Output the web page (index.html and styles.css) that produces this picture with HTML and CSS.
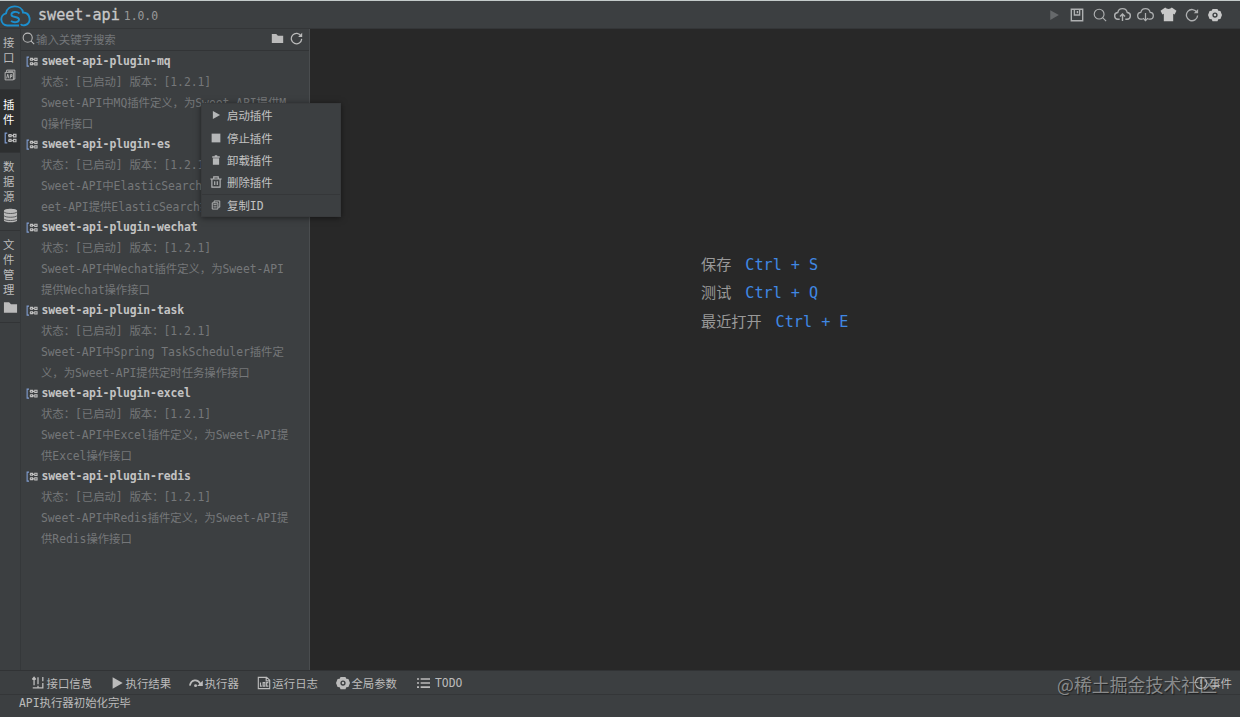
FILE: index.html
```html
<!DOCTYPE html>
<html lang="zh-CN">

<head>
    <meta charset="UTF-8" />
    <meta name="viewport" content="width=device-width, initial-scale=1" />
    <title>sweet-api</title>
    <link rel="stylesheet" href="styles.css">
</head>

<body>
    <!-- Shared icons -->
    <svg class="sprite">
        <symbol id="i-search" viewBox="0 0 16 16"><g fill="none" stroke="currentColor" stroke-width="1.3"><circle cx="7" cy="7" r="5.6" /><path d="M11 11l4 4" /></g></symbol>
        <symbol id="i-refresh" viewBox="0 0 16 16"><path d="M13.6 5A6.4 6.4 0 1 0 14.4 8.500" fill="none" stroke="currentColor" stroke-width="1.5" /><path d="M15 1v5h-5z" fill="currentColor" /></symbol>
        <symbol id="i-folder" viewBox="0 0 16 16"><path d="M1 2.500h5.500l2 2H15v9H1z" fill="currentColor" /></symbol>
        <symbol id="i-play" viewBox="0 0 16 16"><path d="M3 1.500v13L14.500 8z" fill="currentColor" /></symbol>
        <symbol id="i-gear" viewBox="0 0 16 16"><path fill="currentColor" fill-rule="evenodd" d="M5.200 1h5.600l1 2.200 2.400.3L16 8l-1.800 4.500-2.400.3-1 2.200H5.200l-1-2.200-2.400-.3L0 8l1.800-4.500 2.400-.3zM8 5a3 3 0 1 0 0 6 3 3 0 0 0 0-6z" /><circle cx="8" cy="8" r="1.400" fill="currentColor" /></symbol>
        <symbol id="i-plugin" viewBox="0 0 16 16"><path d="M4 1.500H1.500v12H4" fill="none" stroke="#7f9cce" stroke-width="1.500" /><g fill="none" stroke="currentColor" stroke-width="1.500"><path d="M5 4.500h1M9 4.500h2M5 10.500h1M9 10.500h2" /><path d="M6.200 3.200h2.500v2.500H6.200zM11.700 3h3v3h-3zM6.200 9h2.500v2.500H6.200zM11.700 9h3v3h-3z" /></g></symbol>
        <symbol id="i-api" viewBox="0 0 16 16"><g fill="none" stroke="currentColor" stroke-width="1.200"><path d="M3.500 4V1.500h11v12h-2M1.500 4.500h11v10h-11zM3.500 12.500L5 7l1.500 5.500M8.500 12.500V7.500h2V10h-2M5.500 3h7" /></g></symbol>
        <symbol id="i-db" viewBox="0 0 16 16"><path d="M1 3c0-3 14-3 14 0v10c0 3-14 3-14 0z" fill="currentColor" /><path d="M1 4c1 2.500 13 2.500 14 0M1 8c1 2.500 13 2.500 14 0M1 11.500c1 2.500 13 2.500 14 0" fill="none" stroke="#3c3f41" stroke-width=".8" /></symbol>
        <symbol id="i-save" viewBox="0 0 16 16"><path d="M1.500 1.500h13v13h-13zM5 2v6h6V2M8.500 3.500V6" fill="none" stroke="currentColor" stroke-width="1.600" /></symbol>
        <symbol id="i-upload" viewBox="0 0 18 16"><path d="M6 13H4.500A3.600 3.600 0 0 1 4 5.800a5.100 5.100 0 0 1 10 0A3.600 3.600 0 0 1 13.500 13H12M9 15V7.500M6.300 10.200L9 7.500l2.700 2.700" fill="none" stroke="currentColor" stroke-width="1.500" /></symbol>
        <symbol id="i-download" viewBox="0 0 18 16"><path d="M6 13H4.500A3.600 3.600 0 0 1 4 5.800a5.100 5.100 0 0 1 10 0A3.600 3.600 0 0 1 13.500 13H12M9 6.500v8M6.300 11.800L9 14.500l2.700-2.700" fill="none" stroke="currentColor" stroke-width="1.300" /></symbol>
        <symbol id="i-shirt" viewBox="0 0 18 16"><path d="M5.500.5C7 2.500 11 2.500 12.500.5L17.500 4l-2 4-1.500-.7v8H4v-8L2.500 8l-2-4z" fill="currentColor" /></symbol>
        <symbol id="i-stop" viewBox="0 0 16 16"><path d="M1 1h14v14H1z" fill="currentColor" /></symbol>
        <symbol id="i-bin" viewBox="0 0 16 16"><path d="M2 2H6V.5h4V2h4v2.300H2zM3 5.200h10v10.300H3z" fill="currentColor" /></symbol>
        <symbol id="i-trash" viewBox="0 0 16 16"><path d="M.5 4h15M5 4V1.200h6V4M2.500 4v10.800h11V4M6.300 7v5M9.700 7v5" fill="none" stroke="currentColor" stroke-width="1.500" /></symbol>
        <symbol id="i-copy" viewBox="0 0 16 16"><path d="M5 4V1.500h9v10h-2.500M2 4.500h9v10H2zM4 7.500h5M4 11h5" fill="none" stroke="currentColor" stroke-width="1.500" /></symbol>
        <symbol id="i-info" viewBox="0 0 16 16"><path d="M3.500 1.500v9M8 1.500v8M1.500 4l2-2.500 2 2.500M2 13.500h11.500V8M13.500 1v5M8 11v2" fill="none" stroke="currentColor" stroke-width="1.500" /></symbol>
        <symbol id="i-step" viewBox="0 0 16 16"><path d="M1 11C2.500 3.500 10 3 13 9" fill="none" stroke="currentColor" stroke-width="2" /><path d="M15.800 5v6.500H9.300z" fill="currentColor" /><circle cx="7.500" cy="11" r="1.700" fill="currentColor" /></symbol>
        <symbol id="i-log" viewBox="0 0 16 16"><path d="M1.500 8V1.500h9.500l3.500 3.300V8M1.500 7v7.500h13V7M10.500 2v3.500H14M4 7.500v4h1.500M7 7.500h2v4H7zM13 7.500h-2v4h2" fill="none" stroke="currentColor" stroke-width="1.300" /></symbol>
        <symbol id="i-list" viewBox="0 0 16 16"><path d="M0 3h2.500M4.500 3H16M0 8h2.500M4.500 8H16M0 13h2.500M4.500 13H16" fill="none" stroke="currentColor" stroke-width="2" /></symbol>
        <symbol id="i-event" viewBox="0 0 16 16"><circle cx="8" cy="8" r="6.500" fill="none" stroke="currentColor" stroke-width="1.300" /><path d="M8 4v5M8 10.500V12" stroke="currentColor" stroke-width="1.500" /></symbol>
    </svg>

    <!-- Header -->
    <header class="header">
        <svg class="logo" viewBox="0 0 31 22">
            <path d="M19 20.500H7.200A6.200 6.200 0 0 1 6 8.300C7.500-1 22-.5 23 7.500c7.500 0 9 10.500 2.500 12.500-2 .6-4 .6-4.500-1" />
            <path d="M19.500 8.500c-3-3-8.500-1.500-8 1.500.6 3 7.500 1 7.500 4.500 0 3-5 3.500-8 1.500" />
        </svg>
        <h1>sweet-api</h1>
        <span class="version">1.0.0</span>
        <div class="tools">
            <svg class="disabled"><use href="#i-play" /></svg>
            <svg><use href="#i-save" /></svg>
            <svg><use href="#i-search" /></svg>
            <svg class="wide"><use href="#i-upload" /></svg>
            <svg class="wide"><use href="#i-download" /></svg>
            <svg class="wide bright"><use href="#i-shirt" /></svg>
            <svg><use href="#i-refresh" /></svg>
            <svg class="bright"><use href="#i-gear" /></svg>
        </div>
    </header>

    <main class="main">
        <!-- Vertical tabs -->
        <nav class="tabs">
            <div class="tab tab-api"><span>接口</span><svg><use href="#i-api" /></svg></div>
            <div class="tab tab-plugin active"><span>插件</span><svg><use href="#i-plugin" /></svg></div>
            <div class="tab tab-db"><span>数据源</span><svg><use href="#i-db" /></svg></div>
            <div class="tab tab-file"><span>文件管理</span><svg><use href="#i-folder" /></svg></div>
        </nav>

        <!-- Plugin list -->
        <aside class="panel">
            <div class="search">
                <svg><use href="#i-search" /></svg>
                <span class="placeholder">输入关键字搜索</span>
                <svg><use href="#i-folder" /></svg>
                <svg><use href="#i-refresh" /></svg>
            </div>
            <ul class="plugins">
                <li>
                    <h2><svg><use href="#i-plugin" /></svg>sweet-api-plugin-mq</h2>
                    <p>状态：[已启动] 版本：[1.2.1]</p>
                    <p>Sweet-API中MQ插件定义，为Sweet-API提供M<br>Q操作接口</p>
                </li>
                <li>
                    <h2><svg><use href="#i-plugin" /></svg>sweet-api-plugin-es</h2>
                    <p>状态：[已启动] 版本：[1.2.1]</p>
                    <p>Sweet-API中ElasticSearch插件定义，为Sw<br>eet-API提供ElasticSearch操作接口</p>
                </li>
                <li>
                    <h2><svg><use href="#i-plugin" /></svg>sweet-api-plugin-wechat</h2>
                    <p>状态：[已启动] 版本：[1.2.1]</p>
                    <p>Sweet-API中Wechat插件定义，为Sweet-API<br>提供Wechat操作接口</p>
                </li>
                <li>
                    <h2><svg><use href="#i-plugin" /></svg>sweet-api-plugin-task</h2>
                    <p>状态：[已启动] 版本：[1.2.1]</p>
                    <p>Sweet-API中Spring TaskScheduler插件定<br>义，为Sweet-API提供定时任务操作接口</p>
                </li>
                <li>
                    <h2><svg><use href="#i-plugin" /></svg>sweet-api-plugin-excel</h2>
                    <p>状态：[已启动] 版本：[1.2.1]</p>
                    <p>Sweet-API中Excel插件定义，为Sweet-API提<br>供Excel操作接口</p>
                </li>
                <li>
                    <h2><svg><use href="#i-plugin" /></svg>sweet-api-plugin-redis</h2>
                    <p>状态：[已启动] 版本：[1.2.1]</p>
                    <p>Sweet-API中Redis插件定义，为Sweet-API提<br>供Redis操作接口</p>
                </li>
            </ul>
        </aside>

        <!-- Empty editor -->
        <section class="editor">
            <div class="shortcuts">
                <div>保存<kbd>Ctrl + S</kbd></div>
                <div>测试<kbd>Ctrl + Q</kbd></div>
                <div>最近打开<kbd>Ctrl + E</kbd></div>
            </div>
        </section>
    </main>

    <!-- Bottom tool windows -->
    <div class="toolbar">
        <div><svg><use href="#i-info" /></svg>接口信息</div>
        <div><svg><use href="#i-play" /></svg>执行结果</div>
        <div><svg><use href="#i-step" /></svg>执行器</div>
        <div><svg><use href="#i-log" /></svg>运行日志</div>
        <div><svg><use href="#i-gear" /></svg>全局参数</div>
        <div class="todo"><svg><use href="#i-list" /></svg>TODO</div>
        <div class="events"><svg><use href="#i-event" /></svg>事件</div>
    </div>
    <footer class="status">API执行器初始化完毕</footer>

    <!-- Context menu -->
    <div class="menu">
        <div><svg><use href="#i-play" /></svg>启动插件</div>
        <div><svg><use href="#i-stop" /></svg>停止插件</div>
        <div><svg><use href="#i-bin" /></svg>卸载插件</div>
        <div><svg class="large"><use href="#i-trash" /></svg>删除插件</div>
        <div class="divided"><svg><use href="#i-copy" /></svg>复制ID</div>
    </div>

    <div class="watermark">@稀土掘金技术社区</div>
</body>

</html>
```
FILE: styles.css
```css
/* Reset & Global Styles */
* {
    margin: 0;
    padding: 0;
    box-sizing: border-box;
}

body {
    display: flex;
    flex-direction: column;
    height: 717px;
    overflow: hidden;
    background: #3c3f41;
    color: #bbb;
    font-family: "DejaVu Sans Mono", "Noto Sans CJK SC", monospace;
    font-size: 11.4px;
    white-space: nowrap;
}

svg {
    width: 12px;
    height: 12px;
    flex: none;
}

.sprite {
    position: absolute;
    width: 0;
    height: 0;
}

/* Header */
.header {
    display: flex;
    align-items: center;
    height: 29px;
    flex: none;
    border-top: 1px solid #c4cbca;
    border-bottom: 1px solid #343638;
}

.logo {
    width: 31px;
    height: 22px;
    margin-top: 3px;
    fill: none;
    stroke: #1c8fce;
    stroke-width: 1.9;
}

h1 {
    margin-left: 7px;
    font-size: 15.1px;
    font-weight: normal;
    color: #c8c8c8;
    -webkit-text-stroke: 0.3px #c8c8c8;
}

.version {
    margin: 2px 0 0 4px;
    color: #999;
}

.tools {
    display: flex;
    align-items: center;
    gap: 9px;
    margin-left: auto;
    padding-right: 18px;
    color: #aeb0b1;
}

.tools svg {
    width: 14px;
    height: 14px;
}

.tools .wide {
    width: 17px;
    height: 15px;
    margin: 0 -1px 0 -2px;
}

.tools .disabled {
    width: 12px;
    height: 12px;
    color: #66696b;
}

.tools .disabled + svg {
    margin-left: 1px;
}

.bright {
    color: #c8c8c8;
}

/* Layout */
.main {
    display: flex;
    flex: 1;
    min-height: 0;
}

/* Vertical Tabs */
.tabs {
    width: 21px;
    flex: none;
    border-right: 1px solid #35383a;
}

.tab {
    display: flex;
    flex-direction: column;
    align-items: center;
    padding-top: 7px;
    border-bottom: 1px solid #323436;
    line-height: 15px;
}

.tab span {
    width: 12px;
    margin-right: 2px;
    white-space: normal;
    word-break: break-all;
}

.tab svg {
    margin-top: 3px;
}

.tab-api {
    height: 61px;
}

.tab-plugin {
    height: 63px;
    padding-top: 8px;
}

.tab-plugin svg {
    width: 13px;
    height: 13px;
    margin-top: 4px;
}

.tab-db {
    height: 78px;
}

.tab-db svg,
.tab-file svg {
    width: 15px;
    height: 15px;
}

.tab-file {
    height: 92px;
    padding-top: 7px;
}

.tab-file svg {
    margin-top: 2px;
}

.tab.active {
    background: #2d2f30;
    color: #fff;
}

.tab.active svg {
    color: #bbb;
}

/* Plugin Panel */
.panel {
    width: 289px;
    flex: none;
    border-right: 1px solid #4a4d4f;
}

.search {
    display: flex;
    align-items: center;
    height: 22px;
    padding: 0 6px 2px 1px;
    border-bottom: 1px solid #323436;
}

.search svg {
    width: 13px;
    height: 13px;
}

.search svg + svg {
    margin-left: 6px;
}

.placeholder {
    flex: 1;
    margin-left: 1px;
    color: #737679;
}

.plugins {
    list-style: none;
}

.plugins li {
    height: 83px;
}

.plugins h2 {
    display: flex;
    align-items: center;
    padding-left: 5px;
    font-size: 11.4px;
    line-height: 21px;
    letter-spacing: -0.07px;
    color: #c3c3c3;
}

.plugins h2 svg {
    margin-right: 3.5px;
}

.plugins p {
    padding-left: 20px;
    line-height: 20.8px;
    letter-spacing: -0.05px;
    color: #757779;
}

/* Editor */
.editor {
    flex: 1;
    padding: 222px 0 0 391px;
    background: #282828;
}

.shortcuts {
    font-size: 15.15px;
    line-height: 28.4px;
    color: #999;
}

kbd {
    margin-left: 14px;
    font: inherit;
    color: #4088e4;
}

/* Bottom Toolbar */
.toolbar {
    display: flex;
    align-items: center;
    gap: 18px;
    height: 25px;
    flex: none;
    padding: 0 8px 0 31px;
    border-top: 1px solid #313335;
    border-bottom: 1px solid #343638;
}

.toolbar div {
    display: flex;
    align-items: center;
}

.toolbar svg {
    width: 14px;
    height: 14px;
    margin-right: 1.5px;
}

.toolbar .todo {
    margin-left: 2px;
}

.toolbar .todo svg {
    width: 13px;
    margin-right: 5px;
}

.toolbar .events {
    margin-left: auto;
}

.status {
    height: 22px;
    flex: none;
    padding-left: 19px;
    line-height: 17px;
}

/* Context Menu */
.menu {
    position: absolute;
    left: 201px;
    top: 103px;
    width: 140px;
    height: 114px;
    background: #3c3f41;
    border: 1px solid #393b3d;
    box-shadow: 0 1px 6px rgba(0, 0, 0, 0.5);
}

.menu div {
    display: flex;
    align-items: center;
    height: 22.4px;
    padding-left: 9px;
    color: #c2c2c2;
}

.menu svg {
    width: 10px;
    height: 10px;
    margin: 0 6px 0 0;
    color: #b5b7b8;
}

.menu .large {
    width: 12px;
    height: 12px;
    margin: 0 5px 0 -1px;
}

.menu .divided {
    border-top: 1px solid #353739;
}

/* Watermark */
.watermark {
    position: absolute;
    left: 1057px;
    top: 671px;
    font: 17.9px/26px "Noto Sans CJK SC", sans-serif;
    color: rgba(200, 200, 200, 0.6);
    text-shadow: 1px 1px 1px rgba(0, 0, 0, 0.5);
}
```
